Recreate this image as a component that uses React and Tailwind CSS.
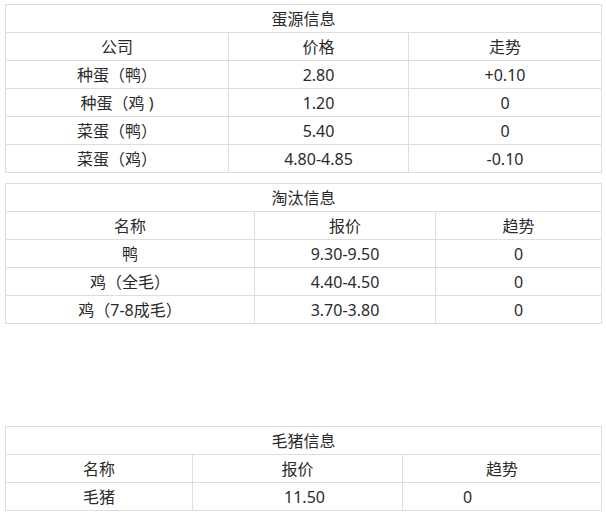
import React from 'react';

const eggs = [
    ['种蛋（鸭）', '2.80', '+0.10'],
    ['种蛋（鸡 )', '1.20', '0'],
    ['菜蛋（鸭）', '5.40', '0'],
    ['菜蛋（鸡）', '4.80-4.85', '-0.10'],
];

const culls = [
    ['鸭', '9.30-9.50', '0'],
    ['鸡（全毛）', '4.40-4.50', '0'],
    ['鸡（7-8成毛）', '3.70-3.80', '0'],
];

const cell = 'border border-[#dddddd] h-[28px] p-0 pt-[2px] text-center font-normal leading-[25px]';

function InfoTable({ title, head, rows, widths, className = '' }) {
    return (
        <table className={`w-[596px] ml-[5px] table-fixed border-collapse ${className}`}>
            <colgroup>
                {widths.map((w, i) => (
                    <col key={i} style={{ width: w }} />
                ))}
            </colgroup>
            <tbody>
                <tr>
                    <td colSpan={3} className={cell}>{title}</td>
                </tr>
                <tr>
                    {head.map(h => (
                        <td key={h} className={cell}>{h}</td>
                    ))}
                </tr>
                {rows.map((r, i) => (
                    <tr key={i}>
                        {r.map((c, j) => (
                            <td key={j} className={cell}>{c}</td>
                        ))}
                    </tr>
                ))}
            </tbody>
        </table>
    );
}

export default function App() {
    return (
        <div
            className="w-[606px] h-[514px] bg-white text-[16px] text-[#2b2b2b] pt-[4px]"
            style={{ fontFamily: '"Noto Sans", "Noto Sans CJK SC", sans-serif' }}
        >
            <InfoTable
                title="蛋源信息"
                head={['公司', '价格', '走势']}
                rows={eggs}
                widths={['223px', '180px', '193px']}
            />

            <InfoTable
                title="淘汰信息"
                head={['名称', '报价', '趋势']}
                rows={culls}
                widths={['249px', '181px', '166px']}
                className="mt-[10px]"
            />

            {/* 毛猪 table: data row is not centered in the source */}
            <table className="w-[596px] ml-[5px] mt-[102px] table-fixed border-collapse">
                <colgroup>
                    <col style={{ width: '187px' }} />
                    <col style={{ width: '210px' }} />
                    <col style={{ width: '199px' }} />
                </colgroup>
                <tbody>
                    <tr>
                        <td colSpan={3} className={cell}>毛猪信息</td>
                    </tr>
                    <tr>
                        <td className={cell}>名称</td>
                        <td className={cell}>报价</td>
                        <td className={cell}>趋势</td>
                    </tr>
                    <tr>
                        <td className={cell}>毛猪</td>
                        <td className={`${cell} pl-[14px]`}>11.50</td>
                        <td className={`${cell} !text-left pl-[60px]`}>0</td>
                    </tr>
                </tbody>
            </table>
        </div>
    );
}
